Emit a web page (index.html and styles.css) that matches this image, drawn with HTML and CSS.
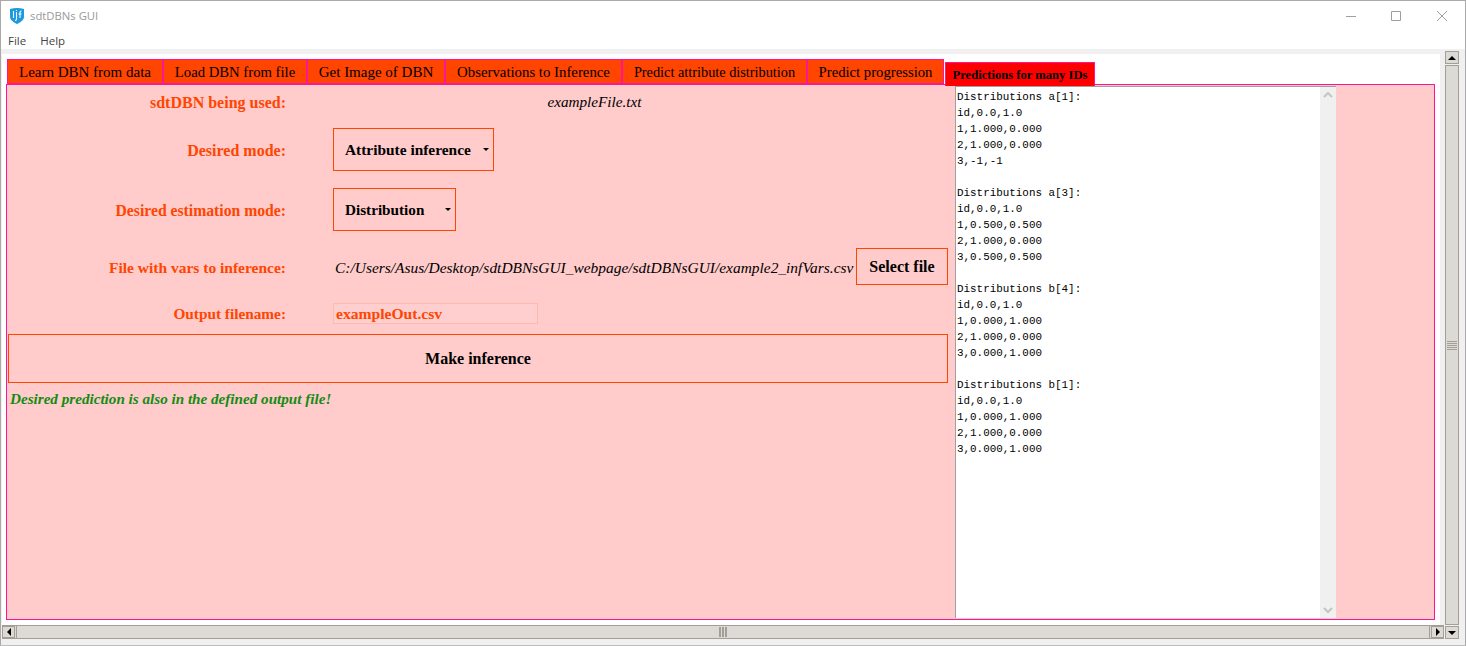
FILE: index.html
```html
<!DOCTYPE html>
<html lang="en">
<head>
  <meta charset="UTF-8">
  <meta name="viewport" content="width=device-width, initial-scale=1.0">
  <title>sdtDBNs GUI</title>
  <link rel="stylesheet" href="styles.css">
</head>
<body>
  <div class="window">
    <!-- Title bar -->
    <div class="titlebar">
      <svg class="app-icon" width="14" height="16" viewBox="0 0 14 16">
        <path d="M0 1Q7 -1 14 1V9C14 12 10 14.500 7 16C4 14.500 0 12 0 9Z" fill="#1c9ade"/>
        <path d="M3.500 3V10M6.500 4V11Q6.500 12.500 5 12.500M6.500 2V3M10 10V4Q10 3 11.500 3M8.500 6H11.500" stroke="#fff" stroke-width="1.100" fill="none"/>
      </svg>
      <span class="app-name">sdtDBNs GUI</span>
      <div class="win-buttons">
        <svg width="10" height="10" viewBox="0 0 10 10"><path d="M0 5.500H10" stroke="#a0a0a0"/></svg>
        <svg width="10" height="10" viewBox="0 0 10 10"><path d="M.5.500H9.500V9.500H.5Z" stroke="#a0a0a0" fill="none"/></svg>
        <svg class="win-close" width="10" height="10" viewBox="0 0 10 10"><path d="M0 0L10 10M10 0L0 10" stroke="#a0a0a0"/></svg>
      </div>
    </div>

    <!-- Menu -->
    <div class="menubar">
      <span>File</span>
      <span>Help</span>
    </div>

    <div class="viewport">
      <div class="main">
        <div class="canvas">
          <!-- Tabs -->
          <div class="tabs">
            <div class="tab tab-1">Learn DBN from data</div>
            <div class="tab tab-2">Load DBN from file</div>
            <div class="tab tab-3">Get Image of DBN</div>
            <div class="tab tab-4">Observations to Inference</div>
            <div class="tab tab-5">Predict attribute distribution</div>
            <div class="tab tab-6">Predict progression</div>
            <div class="tab tab-active">Predictions for many IDs</div>
          </div>

          <div class="pane">
            <div class="form">
              <div class="row row-used">
                <div class="label">sdtDBN being used:</div>
                <div class="used-file">exampleFile.txt</div>
              </div>
              <div class="row row-mode">
                <div class="label">Desired mode:</div>
                <div class="select select-mode">Attribute inference<span class="caret"></span></div>
              </div>
              <div class="row row-estimation">
                <div class="label">Desired estimation mode:</div>
                <div class="select select-estimation">Distribution<span class="caret"></span></div>
              </div>
              <div class="row row-file">
                <div class="label">File with vars to inference:</div>
                <div class="file-path">C:/Users/Asus/Desktop/sdtDBNsGUI_webpage/sdtDBNsGUI/example2_infVars.csv</div>
                <div class="btn btn-file">Select file</div>
              </div>
              <div class="row row-output">
                <div class="label">Output filename:</div>
                <div class="output-input">exampleOut.csv</div>
              </div>
              <div class="btn btn-run">Make inference</div>
              <div class="success">Desired prediction is also in the defined output file!</div>
            </div>

            <div class="results">
              <pre class="results-text">Distributions a[1]:
id,0.0,1.0
1,1.000,0.000
2,1.000,0.000
3,-1,-1

Distributions a[3]:
id,0.0,1.0
1,0.500,0.500
2,1.000,0.000
3,0.500,0.500

Distributions b[4]:
id,0.0,1.0
1,0.000,1.000
2,1.000,0.000
3,0.000,1.000

Distributions b[1]:
id,0.0,1.0
1,0.000,1.000
2,1.000,0.000
3,0.000,1.000</pre>
              <div class="text-scroll">
                <svg width="10" height="6" viewBox="0 0 10 6"><path d="M1 5L5 1L9 5" stroke="#c4c4c4" stroke-width="2" fill="none"/></svg>
                <svg width="10" height="6" viewBox="0 0 10 6"><path d="M1 1L5 5L9 1" stroke="#c4c4c4" stroke-width="2" fill="none"/></svg>
              </div>
            </div>
          </div>
        </div>

        <!-- Outer horizontal scrollbar -->
        <div class="hscroll">
          <div class="sb-btn sb-btn-h"><span class="arrow arrow-left"></span></div>
          <div class="hscroll-thumb"><span class="grip grip-v"></span></div>
          <div class="sb-btn sb-btn-h"><span class="arrow arrow-right"></span></div>
        </div>
      </div>

      <!-- Outer vertical scrollbar -->
      <div class="vscroll">
        <div class="sb-btn sb-btn-v"><span class="arrow arrow-up"></span></div>
        <div class="vscroll-thumb"><span class="grip grip-h"></span></div>
        <div class="sb-btn sb-btn-v"><span class="arrow arrow-down"></span></div>
      </div>
    </div>
  </div>
</body>
</html>
```

FILE: styles.css
```css
/* Page */
html, body {
  margin: 0;
  height: 100%;
  overflow: hidden;
}

body {
  background: #fff;
  font-family: "Liberation Serif", serif;
}

.window {
  box-sizing: border-box;
  height: 646px;
  display: flex;
  flex-direction: column;
  border: 1px solid #a9a9a9;
  border-bottom-color: #bdbdbd;
}

/* Title bar */
.titlebar {
  height: 29px;
  flex: none;
  display: flex;
  align-items: center;
  padding-left: 9px;
  font-family: "Open Sans", sans-serif;
}

.app-icon {
  margin-right: 6px;
}

.app-name {
  font-size: 11.300px;
  color: #999;
}

.win-buttons {
  margin-left: auto;
  display: flex;
  gap: 35px;
  padding-right: 18px;
}

.win-close {
  margin-left: 1px;
}

/* Menu */
.menubar {
  box-sizing: border-box;
  height: 19px;
  flex: none;
  display: flex;
  gap: 14px;
  align-items: center;
  padding: 2px 0 0 7px;
  font-family: "Open Sans", sans-serif;
  font-size: 11.500px;
  color: #444;
}

/* Main area */
.viewport {
  flex: 1;
  display: flex;
  background: #f0f0f0;
  min-height: 0;
}

.main {
  width: 1443px;
  flex: none;
  display: flex;
  flex-direction: column;
  padding: 5px 0 6px 1px;
  box-sizing: border-box;
}

.canvas {
  flex: 1;
  min-height: 0;
  width: 1438px;
  background: #fff;
  padding: 5px 5px 5px 4px;
  box-sizing: border-box;
  display: flex;
  flex-direction: column;
}

/* Tabs */
.tabs {
  height: 25px;
  flex: none;
  display: flex;
  align-items: flex-start;
  margin-left: 1px;
}

.tab {
  box-sizing: border-box;
  height: 25px;
  background: #ff4500;
  border: 1px solid #ff1493;
  color: #000;
  font-size: 14.700px;
  line-height: 24px;
  text-align: center;
  white-space: nowrap;
}

.tab-1 { width: 156px; font-size: 15px; }
.tab-2 { width: 144px; }
.tab-3 { width: 138px; font-size: 15px; }
.tab-4 { width: 177px; font-size: 14.800px; }
.tab-5 { width: 185px; font-size: 14.300px; }
.tab-6 { width: 137px; }

.tab-active {
  width: 150px;
  height: 24px;
  margin: 3px 0 0 1px;
  background: #f00;
  font-size: 12.600px;
  font-weight: bold;
  line-height: 24px;
  border-bottom: none;
  position: relative;
  z-index: 1;
}

/* Pane */
.pane {
  flex: 1;
  display: flex;
  min-height: 0;
  background: #ffcccb;
  border: 1px solid #ff1493;
}

.form {
  width: 948px;
  flex: none;
  padding-left: 1px;
  box-sizing: border-box;
  color: #ff4500;
}

.row {
  display: flex;
  align-items: center;
}

.label {
  width: 278px;
  flex: none;
  text-align: right;
  font-size: 15.700px;
  font-weight: bold;
}

.row-used { height: 34px; }
.row-mode { height: 60px; }
.row-estimation { height: 60px; }
.row-file { height: 54px; }
.row-output { height: 41px; }

/* label baselines sit a little lower than the box centre */
.row-used .label { font-size: 16px; padding-top: 1px; }
.row-mode .label { font-size: 16px; padding-top: 3px; }
.row-estimation .label { padding-top: 3px; }
.row-file .label { font-size: 15.500px; padding-top: 3px; }
.row-output .label { font-size: 15.300px; }

.used-file {
  width: 570px;
  padding-left: 47px;
  box-sizing: border-box;
  text-align: center;
  color: #000;
  font-style: italic;
  font-size: 15.200px;
}

.select {
  box-sizing: border-box;
  height: 43px;
  margin-left: 47px;
  border: 1px solid #ff4500;
  padding: 1px 0 0 11px;
  display: flex;
  align-items: center;
  color: #000;
  font-size: 15.400px;
  font-weight: bold;
  position: relative;
}

.select-mode { width: 161px; }
.select-estimation { width: 123px; font-size: 15.200px; }

.caret {
  position: absolute;
  right: 4px;
  top: 19px;
  border: 3px solid transparent;
  border-top-color: #000;
}

.file-path {
  width: 521px;
  margin-left: 49px;
  padding-top: 3px;
  flex: none;
  white-space: nowrap;
  color: #000;
  font-style: italic;
  font-size: 15.450px;
}

.btn {
  box-sizing: border-box;
  border: 1px solid #ff4500;
  color: #000;
  font-weight: bold;
  font-size: 16px;
  text-align: center;
}

.btn-file {
  width: 92px;
  height: 37px;
  line-height: 35px;
}

.output-input {
  box-sizing: border-box;
  width: 205px;
  height: 21px;
  margin-left: 47px;
  border: 1px solid #ffb9b0;
  padding-left: 2px;
  line-height: 19px;
  font-size: 15.600px;
  font-weight: bold;
  background: #ffcfcf;
}

.btn-run {
  width: 940px;
  height: 49px;
  line-height: 47px;
}

.success {
  margin: 7px 0 0 2px;
  color: #148b14;
  font-size: 15.150px;
  font-weight: bold;
  font-style: italic;
}

/* Results */
.results {
  width: 381px;
  flex: none;
  display: flex;
  background: #fff;
  border-left: 1px solid #a0a0a0;
  border-top: 1px solid #a0a0a0;
  margin: 1px 0 1px;
  box-sizing: border-box;
}

.results-text {
  flex: 1;
  margin: 0;
  padding: 2px 0 0 1px;
  font-family: "Liberation Mono", monospace;
  font-size: 10.900px;
  line-height: 16px;
  color: #000;
}

.text-scroll {
  width: 16px;
  flex: none;
  background: #f0f0f0;
  display: flex;
  flex-direction: column;
  justify-content: space-between;
  align-items: center;
  padding: 5px 0;
  box-sizing: border-box;
}

.text-scroll svg {
  display: block;
}

/* Outer scrollbars */
.vscroll {
  width: 14px;
  margin: 2px 0 6px 1px;
  flex: none;
  display: flex;
  flex-direction: column;
}

.hscroll {
  box-sizing: border-box;
  height: 14px;
  flex: none;
  display: flex;
  justify-content: space-between;
  background: #dcdad5;
  border-top: 1px solid #a39e96;
  border-bottom: 1px solid #a39e96;
}

.sb-btn {
  box-sizing: border-box;
  flex: none;
  display: flex;
  align-items: center;
  justify-content: center;
  background: #dcdad5;
  border: 1px solid #a39e96;
}

.sb-btn-v {
  height: 13px;
}

.sb-btn-h {
  width: 13px;
}

.vscroll-thumb {
  flex: 1;
  margin: 1px 0;
  display: flex;
  align-items: center;
  justify-content: center;
  background: #dcdad5;
  border: 1px solid #a39e96;
}

.hscroll-thumb {
  flex: 1;
  margin: 0 1px;
  display: flex;
  align-items: center;
  justify-content: center;
  border-left: 1px solid #a39e96;
  border-right: 1px solid #a39e96;
}

.arrow {
  width: 0;
  height: 0;
  border: 4px solid transparent;
}

.arrow-up { border-bottom-color: #000; border-top-width: 0; }
.arrow-down { border-top-color: #000; border-bottom-width: 0; }
.arrow-left { border-right-color: #000; border-left-width: 0; }
.arrow-right { border-left-color: #000; border-right-width: 0; }

.grip-h {
  width: 10px;
  height: 9px;
  background: repeating-linear-gradient(#a39e96 0 1px, #dcdad5 1px 2px);
}

.grip-v {
  width: 9px;
  height: 10px;
  background: repeating-linear-gradient(90deg, #a39e96 0 2px, #dcdad5 2px 3px);
}
```
